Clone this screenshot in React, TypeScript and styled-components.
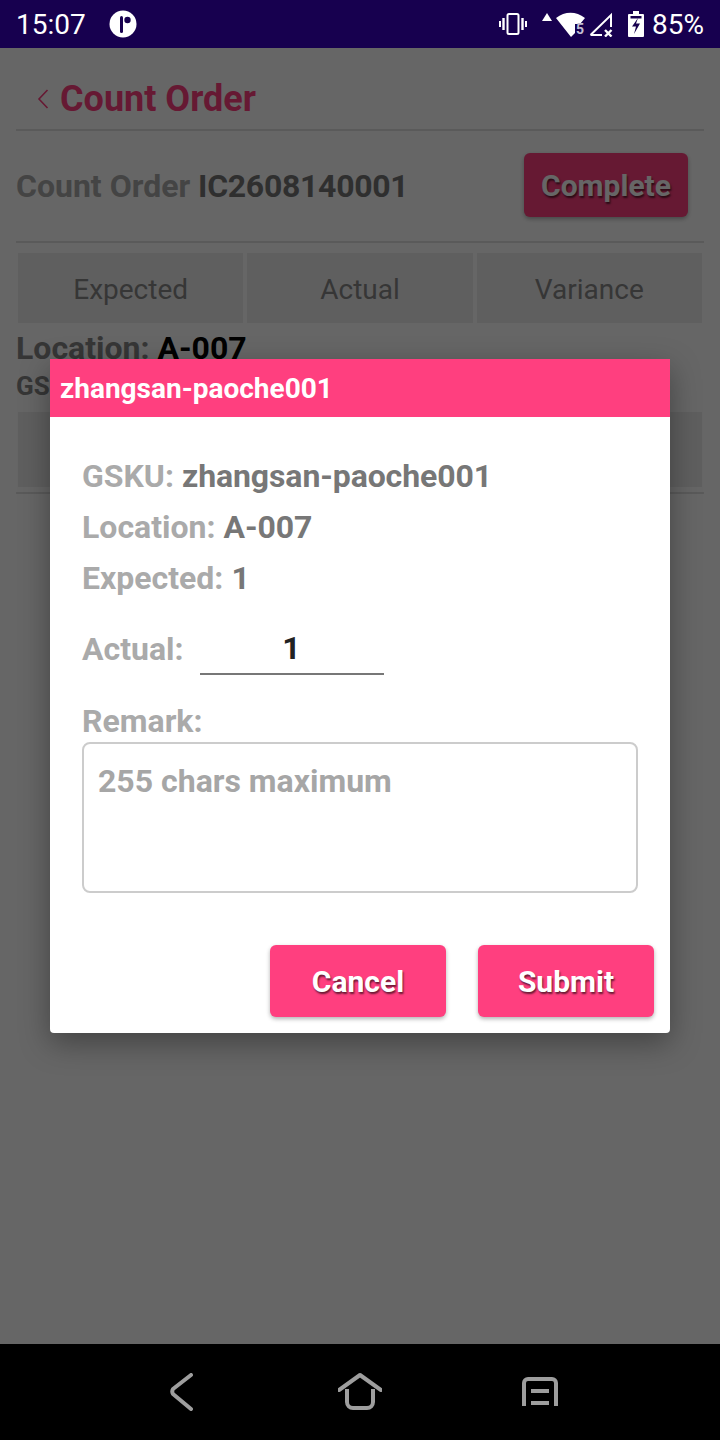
import React from "react";
import styled, {createGlobalStyle} from "styled-components";

const GlobalStyle = createGlobalStyle`
  html, body {
    margin: 0;
    padding: 0;
    background: #000;
  }
  * {
    box-sizing: border-box;
  }
`;

const Screen = styled.div`
  width: 720px;
  height: 1440px;
  display: flex;
  flex-direction: column;
  font-family: Roboto, "Liberation Sans", sans-serif;
  overflow: hidden;
`;

const StatusBar = styled.div`
  height: 48px;
  background: #17004f;
  color: #fff;
  display: flex;
  align-items: center;
  justify-content: space-between;
  padding: 0 16px 0 16px;
`;

const StatusGroup = styled.div`
  display: flex;
  align-items: center;
`;

const StatusIcons = styled.div`
  display: flex;
  align-items: center;
  gap: 15px;
`;

const SignalCluster = styled.div`
  display: flex;
  align-items: center;
  gap: 4px;
`;

const Clock = styled.span`
  font-size: 28px;
  margin-right: 23px;
`;

const Battery = styled.span`
  font-size: 28px;
  margin-left: 8px;
`;

const AppArea = styled.div`
  position: relative;
  flex: 1;
  background: #fff;
`;

const PageHeader = styled.div`
  margin: 0 16px;
  height: 83px;
  display: flex;
  align-items: center;
  padding: 20px 0 0 20px;
  border-bottom: 2px solid #e0e0e0;
`;

const PageTitle = styled.h1`
  margin: 0 0 0 10px;
  font-size: 36px;
  font-weight: 700;
  color: #ff3f7f;
`;

const OrderRow = styled.div`
  margin: 0 16px;
  height: 112px;
  display: flex;
  align-items: center;
  justify-content: space-between;
  padding: 0 16px 2px 0;
  border-bottom: 2px solid #e0e0e0;
`;

const OrderText = styled.div`
  margin-top: 2px;
  font-size: 32px;
  font-weight: 700;
  color: #aaa;
`;

const Strong = styled.span`
  color: #777;
  letter-spacing: -0.3px;
`;

const PinkButton = styled.button`
  width: 176px;
  height: 72px;
  border: 0;
  border-radius: 6px;
  background: #ff3f7f;
  color: #fff;
  font-family: inherit;
  font-size: 30px;
  font-weight: 700;
  text-shadow: 1px 2px 2px rgba(0, 0, 0, 0.6);
  box-shadow: 0 2px 4px rgba(0, 0, 0, 0.3);
  padding: 0;
`;

const CompleteButton = styled(PinkButton)`
  width: 164px;
  height: 64px;
`;

const Tabs = styled.div`
  margin: 10px 18px 0;
  display: grid;
  grid-template-columns: repeat(3, 1fr);
  gap: 4px;
`;

const Tab = styled.div`
  height: 70px;
  background: #eee;
  color: #888;
  font-size: 28px;
  padding-top: 2px;
  display: flex;
  align-items: center;
  justify-content: center;
`;

const LocationLine = styled.div`
  margin: 6px 16px 0;
  font-size: 32px;
  font-weight: 700;
  color: #888;
`;

const LocationValue = styled.span`
  color: #000;
`;

const GskuLine = styled.div`
  margin: 4px 16px 0;
  font-size: 26px;
  font-weight: 700;
  color: #888;
`;

const RowBlock = styled.div`
  margin: 11px 18px 0;
  height: 75px;
  background: #eee;
`;

const RowRule = styled.div`
  margin: 5px 16px 0;
  height: 2px;
  background: #e0e0e0;
`;

const Overlay = styled.div`
  position: absolute;
  inset: 0;
  background: rgba(0, 0, 0, 0.6);
  display: flex;
  justify-content: center;
  padding-top: 311px;
`;

const Dialog = styled.div`
  width: 620px;
  height: 674px;
  background: #fff;
  border-radius: 0 0 4px 4px;
  box-shadow: 0 10px 30px rgba(0, 0, 0, 0.35);
  display: flex;
  flex-direction: column;
`;

const DialogHeader = styled.div`
  height: 58px;
  background: #ff3f7f;
  color: #fff;
  font-size: 28px;
  font-weight: 700;
  display: flex;
  align-items: center;
  padding-left: 10px;
`;

const DialogBody = styled.div`
  flex: 1;
  padding: 33px 32px 0;
  display: flex;
  flex-direction: column;
`;

const InfoLine = styled.div`
  height: 51px;
  font-size: 32px;
  font-weight: 700;
  color: #aaa;
  display: flex;
  align-items: center;
  gap: 8px;
`;

const InfoValue = styled.span`
  color: #777;
  letter-spacing: -0.1px;
`;

const ActualRow = styled.div`
  margin-top: 20px;
  display: flex;
  align-items: center;
  gap: 16px;
  font-size: 32px;
  font-weight: 700;
  color: #aaa;
`;

const ActualInput = styled.div`
  width: 184px;
  height: 52px;
  border-bottom: 2px solid #777;
  color: #222;
  display: flex;
  align-items: center;
  justify-content: center;
`;

const RemarkLabel = styled.div`
  margin-top: 27px;
  font-size: 32px;
  font-weight: 700;
  color: #aaa;
`;

const RemarkBox = styled.div`
  margin-top: 2px;
  width: 556px;
  height: 151px;
  border: 2px solid #ccc;
  border-radius: 8px;
  padding: 18px 14px;
  font-size: 32px;
  font-weight: 700;
  color: #a6a6a6;
`;

const DialogActions = styled.div`
  display: flex;
  justify-content: flex-end;
  gap: 32px;
  margin-top: 52px;
  margin-right: -16px;
`;

const NavBar = styled.div`
  height: 96px;
  background: #000;
  display: grid;
  grid-template-columns: repeat(3, 180px);
  justify-content: center;
  justify-items: center;
  align-items: center;
`;

const NavBackSlot = styled.div`
  display: flex;
  margin-left: 4px;
`;

const VibrateIcon = () => (
    <svg width="28" height="22" viewBox="0 0 28 22" fill="none" stroke="#fff" strokeWidth="2">
        <rect x="8.5" y="1" width="11" height="20" rx="1.5"/>
        <path d="M4.5 5v12M23.5 5v12" strokeWidth="2.4"/>
        <path d="M1 8v6M27 8v6" strokeWidth="2"/>
    </svg>
);

const AppBadge = () => (
    <svg width="28" height="28" viewBox="0 0 28 28">
        <circle cx="14" cy="14" r="13.500" fill="#fff"/>
        <rect x="11" y="6" width="3" height="17" rx="1.500" fill="#17004f"/>
        <circle cx="18.500" cy="10" r="3.200" fill="#17004f"/>
    </svg>
);

const WifiIcons = () => (
    <svg width="43" height="26" viewBox="0 0 43 26">
        <path d="M0 10l5-8 5 8z" fill="#fff"/>
        <path d="M14 7c9-7 20-7 29 0l-5 6h-5v9l-4 4z" fill="#fff"/>
        <text x="34" y="23" fontFamily="Roboto" fontWeight="700" fontSize="14" fill="#c4c0d4">5</text>
    </svg>
);

const NoSignalIcon = () => (
    <svg width="24" height="25" viewBox="0 0 24 25" fill="none" stroke="#fff" strokeWidth="2">
        <path d="M1.500 23L22 3v12M1.500 23H13"/>
        <path d="M16 18l6.500 6.500M22.500 18L16 24.500" strokeWidth="2.400"/>
    </svg>
);

const BatteryIcon = () => (
    <svg width="16" height="26" viewBox="0 0 16 26">
        <path d="M5 0h6v3h4a1 1 0 0 1 1 1v21a1 1 0 0 1-1 1H1a1 1 0 0 1-1-1V4a1 1 0 0 1 1-1h4z" fill="#fff"/>
        <path d="M2.500 5h11v2.500h-11z" fill="#17004f"/>
        <path d="M10 7l-6 8.500h4l-2 7.500 6-10.500H8z" fill="#17004f"/>
    </svg>
);

const BackChevron = () => (
    <svg width="14" height="22" viewBox="0 0 14 22" fill="none" stroke="#ff3f7f" strokeWidth="1.600">
        <path d="M11.500 2L3 11l8.500 9"/>
    </svg>
);

const NavBack = () => (
    <svg width="24" height="38" viewBox="0 0 24 38" fill="none" stroke="#9e9e9e" strokeWidth="4" strokeLinecap="round" strokeLinejoin="round">
        <path d="M21 2L3 16q-1.500 2.500 0 5L21 36"/>
    </svg>
);

const NavHome = () => (
    <svg width="44" height="38" viewBox="0 0 44 38" fill="none" stroke="#9e9e9e" strokeWidth="4" strokeLinejoin="round">
        <path d="M1 17L22 2l21 15" strokeLinecap="round"/>
        <path d="M9 16v13a6 6 0 0 0 6 6h14a6 6 0 0 0 6-6V16"/>
    </svg>
);

const NavRecents = () => (
    <svg width="36" height="32" viewBox="0 0 36 32" fill="none" stroke="#9e9e9e" strokeWidth="4">
        <path d="M2 30V7a4 4 0 0 1 4-4h24a4 4 0 0 1 4 4v23"/>
        <path d="M9 15h18M9 27h18"/>
    </svg>
);

const App: React.FC = () => {
    return (
        <Screen>
            <GlobalStyle/>
            <StatusBar>
                <StatusGroup>
                    <Clock>15:07</Clock>
                    <AppBadge/>
                </StatusGroup>
                <StatusGroup>
                    <StatusIcons>
                        <VibrateIcon/>
                        <SignalCluster>
                            <WifiIcons/>
                            <NoSignalIcon/>
                        </SignalCluster>
                        <BatteryIcon/>
                    </StatusIcons>
                    <Battery>85%</Battery>
                </StatusGroup>
            </StatusBar>
            <AppArea>
                <PageHeader>
                    <BackChevron/>
                    <PageTitle>Count Order</PageTitle>
                </PageHeader>
                <OrderRow>
                    <OrderText>Count Order <Strong>IC2608140001</Strong></OrderText>
                    <CompleteButton>Complete</CompleteButton>
                </OrderRow>
                <Tabs>
                    <Tab>Expected</Tab>
                    <Tab>Actual</Tab>
                    <Tab>Variance</Tab>
                </Tabs>
                <LocationLine>Location: <LocationValue>A-007</LocationValue></LocationLine>
                <GskuLine>GSKU</GskuLine>
                <RowBlock/>
                <RowRule/>
                <Overlay>
                    <Dialog>
                        <DialogHeader>zhangsan-paoche001</DialogHeader>
                        <DialogBody>
                            <InfoLine>GSKU: <InfoValue>zhangsan-paoche001</InfoValue></InfoLine>
                            <InfoLine>Location: <InfoValue>A-007</InfoValue></InfoLine>
                            <InfoLine>Expected: <InfoValue>1</InfoValue></InfoLine>
                            <ActualRow>
                                Actual:
                                <ActualInput>1</ActualInput>
                            </ActualRow>
                            <RemarkLabel>Remark:</RemarkLabel>
                            <RemarkBox>255 chars maximum</RemarkBox>
                            <DialogActions>
                                <PinkButton>Cancel</PinkButton>
                                <PinkButton>Submit</PinkButton>
                            </DialogActions>
                        </DialogBody>
                    </Dialog>
                </Overlay>
            </AppArea>
            <NavBar>
                <NavBackSlot><NavBack/></NavBackSlot>
                <NavHome/>
                <NavRecents/>
            </NavBar>
        </Screen>
    );
};

export default App;
